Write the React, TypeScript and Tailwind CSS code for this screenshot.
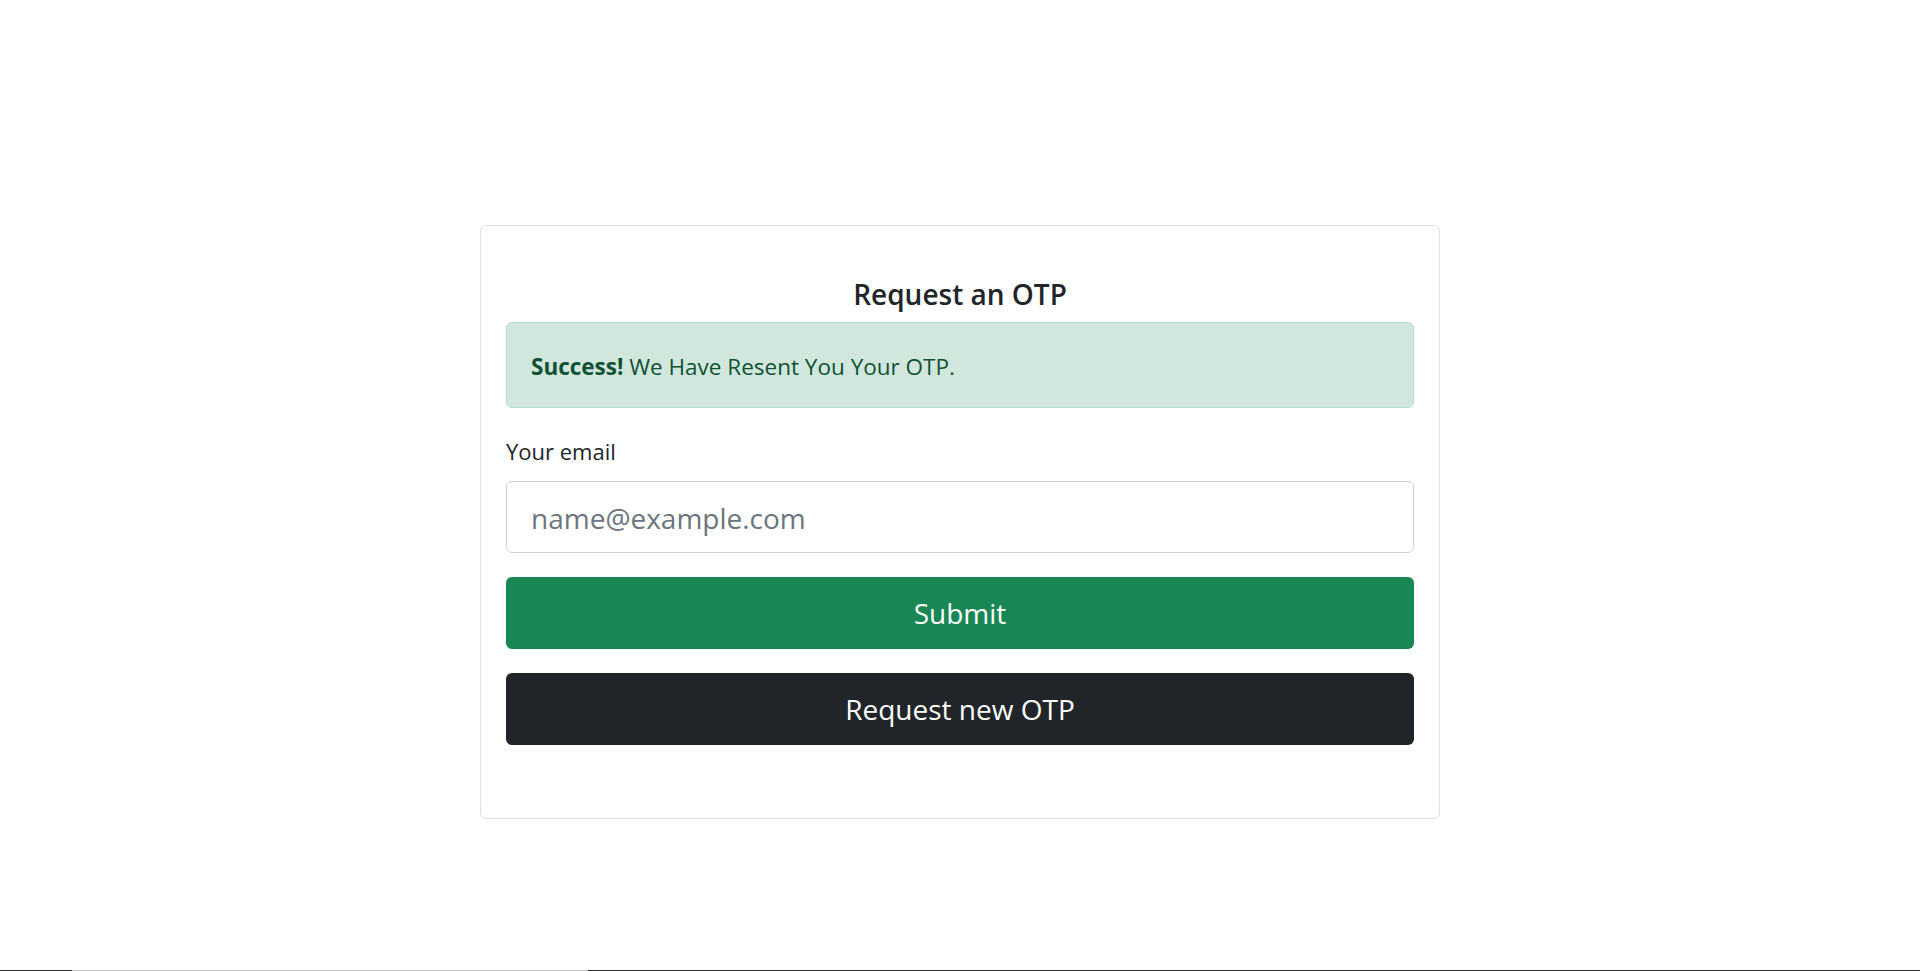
import * as React from 'react';
import { useState } from 'react';

const App = () => {
  const [email, setEmail] = useState('');

  return (
    <div className="min-h-screen flex flex-col bg-white text-[#212529] font-['Open_Sans','Noto_Sans',sans-serif]">
      <div className="flex-1 pt-[225px]">
        <div className="mx-auto w-[960px] rounded-[6px] border border-[#dfdfdf] px-[25px] pt-[50px] pb-[73px]">
          <h5 className="mb-[10px] text-center text-[28px] leading-[36px] font-semibold">Request an OTP</h5>
          <div className="mb-[25px] rounded-[6px] border border-[#badbcc] bg-[#d1e7dd] px-[24px] pt-[26px] pb-[22px] text-[22.5px] leading-[36px] text-[#0f5132]">
            <strong className="font-bold">Success!</strong> We Have Resent You Your OTP.
          </div>
          <form
            onSubmit={(e) => {
              e.preventDefault();
            }}
          >
            <label htmlFor="email" className="mb-[12px] block text-[22px] leading-[36px]">
              Your email
            </label>
            <input
              id="email"
              type="email"
              value={email}
              onChange={(e) => setEmail(e.target.value)}
              placeholder="name@example.com"
              className="block h-[72px] w-full rounded-[6px] border border-[#ced4da] px-[24px] pt-[2px] text-[28px] leading-[45px] outline-none placeholder:text-[#6c757d]"
            />
            <button type="submit" className="mt-[24px] block h-[72px] w-full rounded-[6px] bg-[#198754] text-[28px] leading-[45px] text-white">
              Submit
            </button>
          </form>
          <button type="button" className="mt-[24px] block h-[72px] w-full rounded-[6px] bg-[#212529] text-[28px] leading-[45px] text-white">
            Request new OTP
          </button>
        </div>
      </div>
      <div className="flex h-px">
        <div className="w-[72px] bg-[#2b2b2b]" />
        <div className="w-[516px] bg-[#c0c0c0]" />
        <div className="flex-1 bg-[#2b2b2b]" />
      </div>
    </div>
  );
};

export default App;
